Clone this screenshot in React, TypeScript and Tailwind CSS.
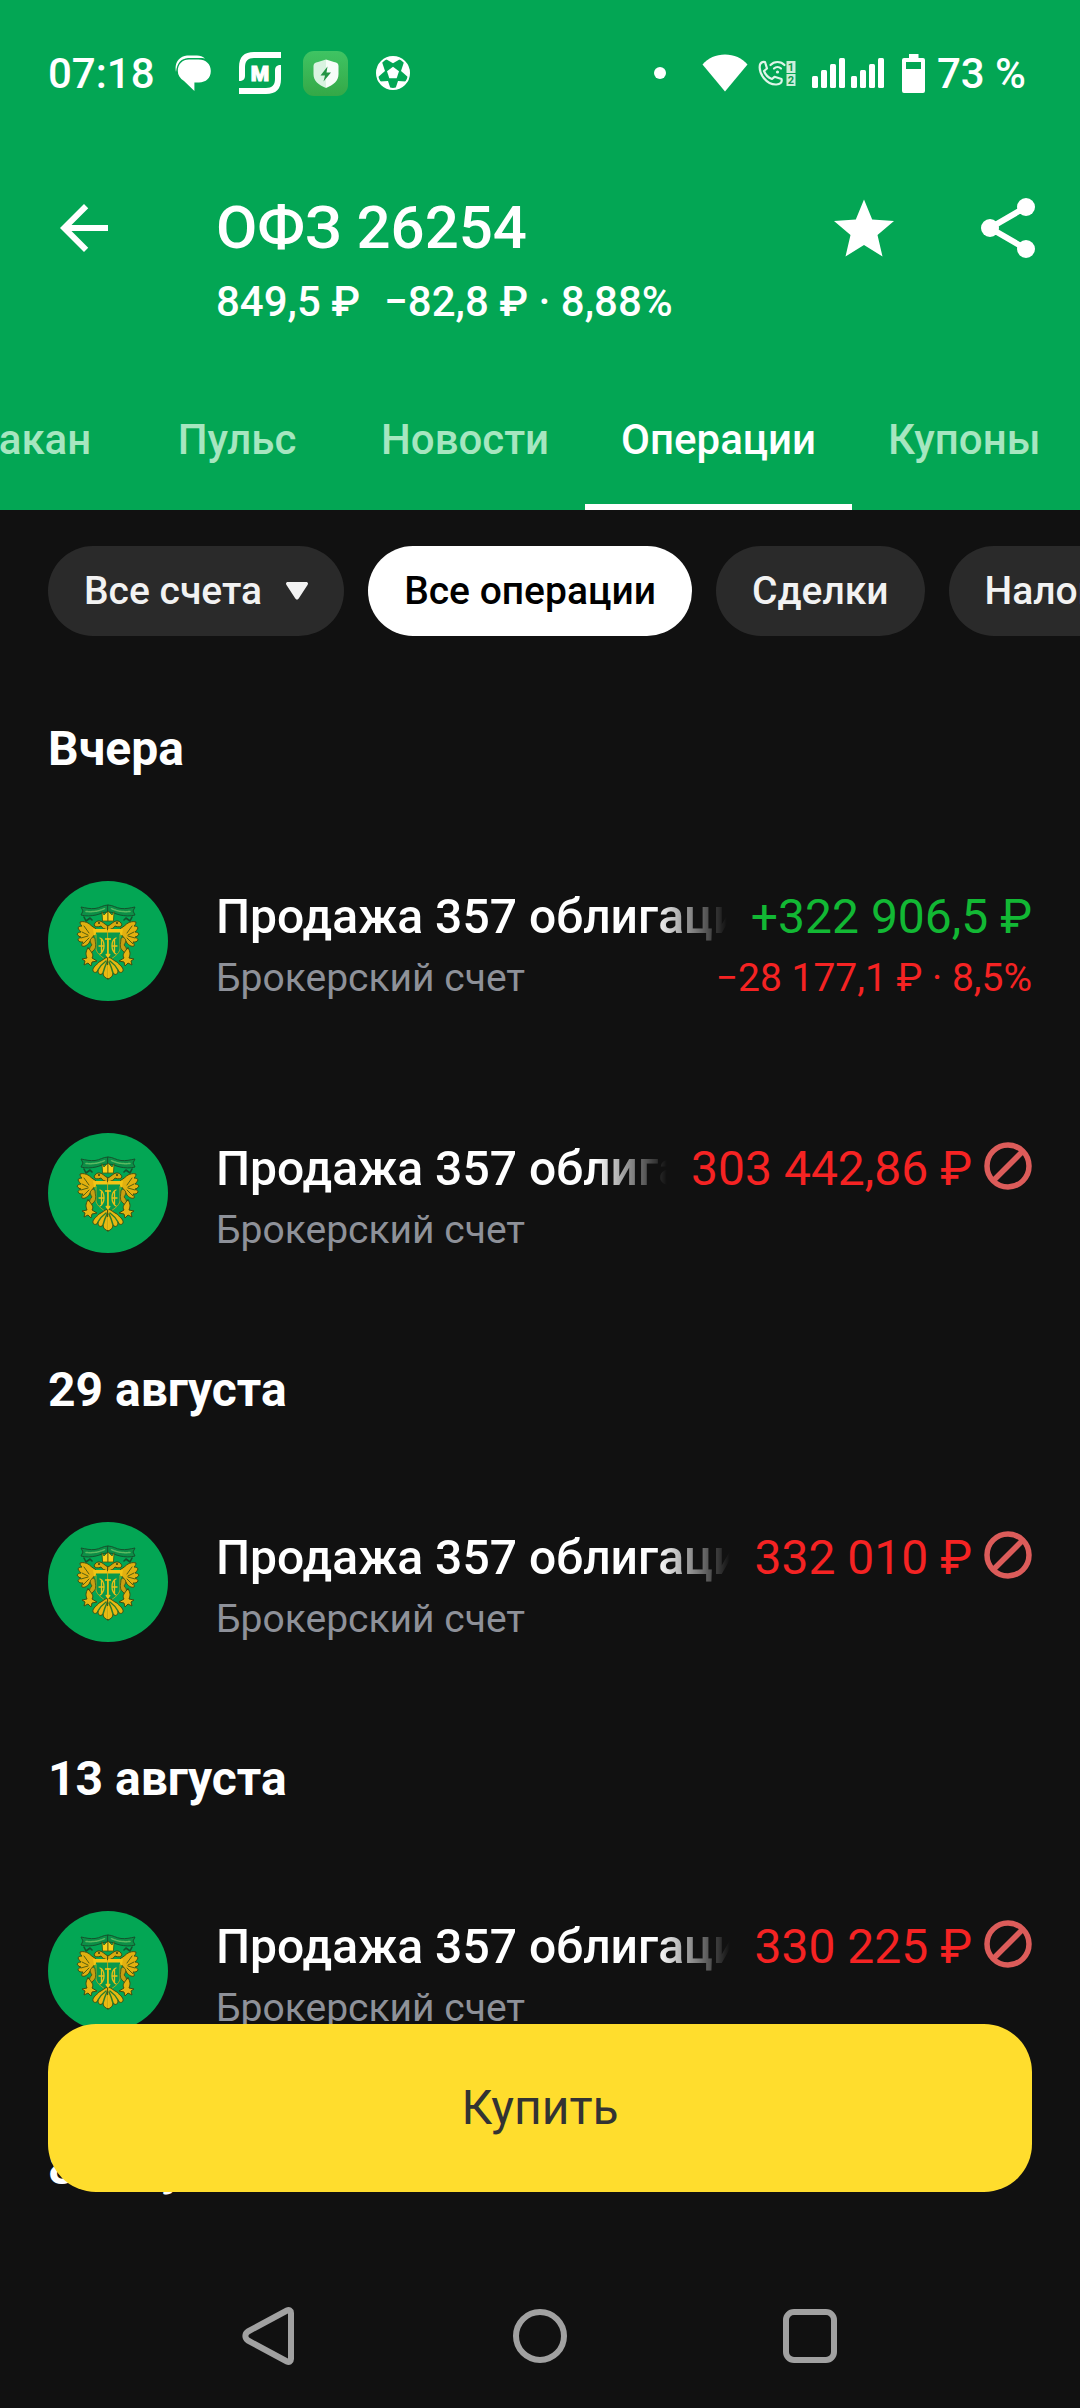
import React from "react";

type Operation = {
  title: string;
  account: string;
  amount: string;
  profit?: string;
  rejected?: boolean;
};

type Section = { date: string; operations: Operation[] };

const TITLE = "Продажа 357 облигаций";
const ACCOUNT = "Брокерский счет";

const sections: Section[] = [
  {
    date: "Вчера",
    operations: [
      {
        title: TITLE,
        account: ACCOUNT,
        amount: "+322\u00a0906,5\u00a0₽",
        profit: "−28\u00a0177,1\u00a0₽ · 8,5%",
      },
      { title: TITLE, account: ACCOUNT, amount: "303\u00a0442,86\u00a0₽", rejected: true },
    ],
  },
  {
    date: "29 августа",
    operations: [{ title: TITLE, account: ACCOUNT, amount: "332\u00a0010\u00a0₽", rejected: true }],
  },
  {
    date: "13 августа",
    operations: [{ title: TITLE, account: ACCOUNT, amount: "330\u00a0225\u00a0₽", rejected: true }],
  },
  { date: "8 августа", operations: [] },
];

const tabs = ["Стакан", "Пульс", "Новости", "Операции", "Купоны"];

function ChatIcon() {
  return (
    <svg className="h-9 w-9" viewBox="0 0 36 36" fill="#fff" aria-hidden="true">
      <path d="M1 17C-1 8 4 1 12 .4h10c3 0 6 1.200 8 3.200C27 2.700 24 3 13 3 6 3.500 2 8 1 17z" />
      <path d="M14 4.400h9.500C31 4.400 35.800 9 35.800 16S31 27.400 24 27.400h-4.600V36L9 26C5 23.500 2.800 20 2.800 16 2.800 9 7.500 4.400 14 4.400z" />
    </svg>
  );
}

function MagnitIcon() {
  return (
    <svg className="h-[42px] w-[42px]" viewBox="0 0 42 42" aria-hidden="true">
      <path d="M42 0H15C5 0 0 5 0 15v14c4 0 6-1.500 6-5.500V15c0-6 3-9 9-9h27z" fill="#fff" />
      <path d="M0 42h27c10 0 15-5 15-15V13c-4 0-6 1.500-6 5.500V27c0 6-3 9-9 9H0z" fill="#fff" />
      <text x="21" y="28.500" textAnchor="middle" fontFamily="Roboto, sans-serif" fontWeight="900" fontSize="21" fill="#fff" stroke="#fff" strokeWidth="1">
        M
      </text>
    </svg>
  );
}

function ShieldIcon() {
  return (
    <svg className="h-[45px] w-[45px]" viewBox="0 0 45 45" aria-hidden="true">
      <defs>
        <linearGradient id="shieldBg" x1="0" y1="0" x2="0" y2="1">
          <stop offset="0" stopColor="#3fc463" />
          <stop offset="1" stopColor="#34a847" />
        </linearGradient>
      </defs>
      <rect width="45" height="45" rx="11" fill="url(#shieldBg)" />
      <path d="M23 8.500 15 11c-3 .8-4.500 1.500-4.500 4v8c0 7 5 11 12.500 14z" fill="#d9f3e0" />
      <path d="M23 8.500l8 2.500c3 .8 4.500 1.500 4.500 4v8c0 7-5 11-12.500 14z" fill="#f6fdf8" />
      <path d="M24.500 15.500 17.500 24.500h4.500l-1.500 6 7.500-9h-4.500z" fill="#239443" />
    </svg>
  );
}

function BallIcon() {
  return (
    <svg className="h-[34px] w-[34px]" viewBox="0 0 34 34" aria-hidden="true">
      <defs>
        <clipPath id="ballClip">
          <circle cx="17" cy="17" r="16" />
        </clipPath>
      </defs>
      <circle cx="17" cy="17" r="16" fill="none" stroke="#fff" strokeWidth="2" />
      <g fill="#fff" clipPath="url(#ballClip)">
        <path d="M17 10.800l6 4.400-2.300 7h-7.400l-2.300-7z" />
        <path d="M8 2 17 7.300 26 2 22 0H12z" />
        <path d="M0 13l6-7 3 9-8 7z" />
        <path d="M34 13l-6-7-3 9 8 7z" />
        <path d="M4 25.500l8-.5 3 9H8z" />
        <path d="M30 25.500l-8-.5-3 9h7z" />
      </g>
    </svg>
  );
}

function WifiIcon() {
  return (
    <svg className="h-[38px] w-[46px]" viewBox="0 0 46 38" fill="#fff" aria-hidden="true">
      <path d="M23 37.500.5 10.500C6 4 14 .5 23 .5s17 3.500 22.500 10z" />
    </svg>
  );
}

function WifiCallIcon() {
  return (
    <svg className="h-[27px] w-[38px]" viewBox="0 0 38 27" aria-hidden="true">
      <g fill="none" stroke="#dff5e8" strokeWidth="2.200" strokeLinecap="round" strokeLinejoin="round">
        <path d="M2 4.500C3 2.500 5 1.500 7 2l2 6.500-3 2.500c1.500 4 4 6.500 8 8l2.500-2.200 7 2.200c1 3.500-1.500 5.500-5 5.500C9 25 0 14 2 4.500z" />
        <path d="M12.500 5C16 1 23 1 26.500 5" />
        <path d="M16 8.500c2-1.800 5-1.800 7 0" />
      </g>
      <circle cx="19.500" cy="12" r="1.600" fill="#dff5e8" />
      <rect x="28.500" y="1" width="9" height="12" fill="#cdeeda" />
      <rect x="28.500" y="14" width="9" height="12" fill="#cdeeda" />
      <g fontFamily="Roboto, sans-serif" fontWeight="700" fontSize="11" fill="#0a9a4d" textAnchor="middle">
        <text x="33" y="11">1</text>
        <text x="33" y="24">2</text>
      </g>
    </svg>
  );
}

function SignalIcon() {
  return (
    <svg className="h-[30px] w-[33px]" viewBox="0 0 33 30" fill="#fff" aria-hidden="true">
      <rect x="0" y="18" width="6" height="12" rx="1.500" />
      <rect x="9" y="12" width="6" height="18" rx="1.500" />
      <rect x="18" y="6" width="6" height="24" rx="1.500" />
      <rect x="27" y="0" width="6" height="30" rx="1.500" />
    </svg>
  );
}

function BatteryIcon() {
  return (
    <svg className="h-[39px] w-[23px]" viewBox="0 0 23 39" aria-hidden="true">
      <path fill="#fff" fillRule="evenodd" d="M7 0h9.500v4H21a2 2 0 0 1 2 2v31a2 2 0 0 1-2 2H2a2 2 0 0 1-2-2V6a2 2 0 0 1 2-2h5zM4 8v7h15V8z" />
    </svg>
  );
}

function StatusBar() {
  return (
    <div className="flex h-[146px] items-center justify-between pl-12 pr-[54px] text-[42px] font-medium">
      <div className="flex items-center">
        <span>07:18</span>
        <span className="ml-5 flex items-center">
          <ChatIcon />
          <span className="ml-7"><MagnitIcon /></span>
          <span className="ml-[22px]"><ShieldIcon /></span>
          <span className="ml-7"><BallIcon /></span>
        </span>
      </div>
      <div className="flex items-center">
        <span className="mr-9 h-3 w-3 rounded-full bg-white" />
        <WifiIcon />
        <span className="ml-2.5"><WifiCallIcon /></span>
        <span className="ml-4 flex gap-1.5">
          <SignalIcon />
          <SignalIcon />
        </span>
        <span className="ml-[18px]"><BatteryIcon /></span>
        <span className="ml-3">73 %</span>
      </div>
    </div>
  );
}

function Header() {
  return (
    <header className="bg-[#03a654] text-white">
      <StatusBar />
      <div className="flex items-start pt-[46px] pl-12 pr-9">
        <button aria-label="Назад" className="mr-24 shrink-0">
          <svg className="h-[72px] w-[72px]" viewBox="0 0 24 24" fill="currentColor" aria-hidden="true">
            <path d="M20 11H7.830l5.590-5.590L12 4l-8 8 8 8 1.410-1.410L7.830 13H20v-2z" />
          </svg>
        </button>
        <div className="min-w-0 flex-1 whitespace-nowrap font-medium">
          <h1 className="text-[60px] leading-[72px]">ОФЗ 26254</h1>
          <p className="mt-2 text-[42px] leading-[60px]">
            <span className="mr-6">849,5 ₽</span>
            <span>−82,8 ₽ · 8,88%</span>
          </p>
        </div>
        <button aria-label="В избранное" className="mr-[72px] shrink-0">
          <svg className="h-[72px] w-[72px]" viewBox="0 0 72 72" fill="currentColor" aria-hidden="true">
            <path d="M36 7.500l8.200 20L66 29l-16.500 14 5 21.500L36 53 17.500 64.500l5-21.500L6 29l21.800-1.500z" />
          </svg>
        </button>
        <button aria-label="Поделиться" className="shrink-0">
          <svg className="h-[72px] w-[72px]" viewBox="0 0 72 72" fill="currentColor" aria-hidden="true">
            <path d="M54 15 18 36l36 21" fill="none" stroke="currentColor" strokeWidth="6" />
            <circle cx="54" cy="15" r="9" />
            <circle cx="18" cy="36" r="9" />
            <circle cx="54" cy="57" r="9" />
          </svg>
        </button>
      </div>
      <nav className="mt-9 overflow-hidden">
        <div role="tablist" className="-ml-[87px] flex text-[42px] font-medium whitespace-nowrap">
          {tabs.map((tab) =>
            tab === "Операции" ? (
              <button key={tab} role="tab" aria-selected="true" className="h-[142px] min-w-[216px] shrink-0 border-y-[6px] border-t-transparent border-b-white px-9">
                {tab}
              </button>
            ) : (
              <button key={tab} role="tab" aria-selected="false" className="h-[142px] min-w-[216px] shrink-0 px-9 text-[#a6e6c0]">
                {tab}
              </button>
            ),
          )}
        </div>
      </nav>
    </header>
  );
}

function Filters() {
  const chip = "flex h-[90px] shrink-0 items-center rounded-full px-9";
  return (
    <div className="flex gap-6 overflow-hidden pt-9 pb-[42px] pl-12 text-[39px] font-medium whitespace-nowrap">
      <button className={`${chip} bg-[#2a2a2a] text-[#f2f2f2]`}>
        Все счета
        <svg className="ml-6 h-[18px] w-[22px]" viewBox="0 0 22 18" fill="currentColor" aria-hidden="true">
          <path d="M2 0h18c2 0 2.500 1.500 1.500 3L12.700 16.500c-1 1.500-2.400 1.500-3.400 0L.5 3C-.5 1.500 0 0 2 0z" />
        </svg>
      </button>
      <button className={`${chip} bg-white text-black`}>Все операции</button>
      <button className={`${chip} bg-[#2a2a2a] text-[#f2f2f2]`}>Сделки</button>
      <button className={`${chip} bg-[#2a2a2a] text-[#f2f2f2]`}>Налоги</button>
    </div>
  );
}

function EagleHalf() {
  return (
    <g strokeLinejoin="round" strokeLinecap="round">
      <path d="M60 24c-5 0-8 3-13 3.500-5 .5-9-.5-14-1.500l2 4-2 4c5 1.500 10 1 15 0 4-.8 7-3 12-3z" fill="#0c8f47" stroke="#14532d" strokeWidth="1" />
      <path d="M38 30.500c7 .5 12 0 19-3" fill="none" stroke="#5cba62" strokeWidth="1.500" strokeDasharray="1.500 1" />
      <path d="M36 36l2 4 4-3 2 2" fill="none" stroke="#14532d" strokeWidth="1.600" />
      {/* head and crown */}
      <path d="M60 49c-4-1-6-2-7-4-3 1.500-6 1-7-1 1-3 3-4.500 6-4 3 .6 4 3 8 5z" fill="#d9a90f" stroke="#3f4f12" strokeWidth="1" />
      <circle cx="51" cy="42" r="1" fill="#33430f" />
      <path d="M54 31l2 3 2-2 2-2v10h-5z" fill="#f7cf1b" stroke="#4b5a12" strokeWidth=".8" />
      {/* wing feathers */}
      <path d="M47 47c-3-1-5-4-7-5-2-1-5-2-8-1 0 2 1 3 2 4-2 0-4 1-4 2 1 2 2 3 3 4-2 0-3 1-4 2 1 2 3 3 4 3-2 1-3 2-3 3 1 2 3 2 5 2-1 2-2 3-1 4 3 1 5-1 7-3 2-4 4-6 6-9z" fill="#e2b010" stroke="#3f4f12" strokeWidth="1" />
      <path d="M36 45l5 7M34 51l6 3M33 57l7-2M35 63l6-6" stroke="#57600f" strokeWidth="1" fill="none" />
      {/* breast shield */}
      <path d="M60 50H47v3h1v15c1 5 6 8 12 12z" fill="#08994c" stroke="#d9a90f" strokeWidth=".8" />
      <path d="M45 48h15v3.500H48c0 2-1 3-2 3z" fill="#f3c515" />
      <path d="M45 56c-4 2-3 5-1 8-3 3-3 5-1 8l3-3c3-3 1-8 1-11z" fill="#c99f12" stroke="#3f4f12" strokeWidth=".8" />
      <path d="M40 67c-3 4-2 7-1 10l-5 1 3 2-1 4 4-2 3 3 1-4 5-1-5-3c2-3 0-6-4-10z" fill="#e5b412" stroke="#3f4f12" strokeWidth="1" />
      {/* tail */}
      <path d="M60 76c-4 1-6 4-9 5-1 2-7 5-6 9 1 2 4 2 5-1 0 4 2 6 5 3 0 3 2 5 5 6z" fill="#e8b812" stroke="#3f4f12" strokeWidth="1" />
      <path d="M58 80c-4 3-6 5-8 9M59 81c-2 4-3 7-4 11" stroke="#2c7d2b" strokeWidth="1.500" fill="none" />
      {/* monogram */}
      <path d="M52 57c3 1 4 4 4 8s-1 6-4 8M53.500 58v14M51 65h5" stroke="#e9c01a" strokeWidth="1.300" fill="none" />
    </g>
  );
}

function Emblem() {
  return (
    <svg className="h-[120px] w-[120px]" viewBox="0 0 120 120" aria-hidden="true">
      <circle cx="60" cy="60" r="60" fill="#03a654" />
      <EagleHalf />
      <g transform="translate(120 0) scale(-1 1)">
        <EagleHalf />
      </g>
      <path d="M60 57v18M57 58h6M58 73l2 3 2-3M60 84v13" stroke="#f3c515" strokeWidth="1.500" fill="none" />
    </svg>
  );
}

function RejectedIcon() {
  return (
    <svg className="mb-1.5 h-12 w-12 shrink-0" viewBox="0 0 48 48" fill="none" stroke="#dc5c5a" role="img" aria-label="Отклонено">
      <circle cx="24" cy="24" r="21" strokeWidth="5.500" />
      <path d="M9.500 38.500l29-29" strokeWidth="5.500" />
    </svg>
  );
}

function OperationRow({ op }: { op: Operation }) {
  return (
    <li className="flex items-start gap-12 px-12 pt-[66px] pb-16">
      <span className="shrink-0">
        <Emblem />
      </span>
      <div className="min-w-0 flex-1 whitespace-nowrap">
        <div className="flex h-[72px] items-center gap-6">
          <p className="min-w-0 flex-1 overflow-hidden text-[48px] leading-[72px] font-medium text-white [mask-image:linear-gradient(to_right,#000_calc(100%-72px),transparent)]">
            {op.title}
          </p>
          <div className="flex shrink-0 items-center gap-3 text-[48px] leading-[72px]">
            {op.rejected ? (
              <>
                <span className="text-[#f52323]">{op.amount}</span>
                <RejectedIcon />
              </>
            ) : (
              <span className="text-[#12b834]">{op.amount}</span>
            )}
          </div>
        </div>
        <div className="flex h-[50px] items-center justify-between text-[39px] leading-[50px]">
          <span className="text-[#8e9199]">{op.account}</span>
          {op.profit && <span className="text-[#f52323]">{op.profit}</span>}
        </div>
      </div>
    </li>
  );
}

function SystemNav() {
  const icon = "h-[60px] w-[60px]";
  return (
    <nav aria-label="Системная навигация" className="flex h-36 items-center justify-center gap-[210px]">
      <button aria-label="Назад">
        <svg className={icon} viewBox="0 0 60 60" fill="none" stroke="#a1a1a1" strokeWidth="6" strokeLinejoin="round" aria-hidden="true">
          <path d="M47 4.500 8 25.500c-3.500 2.500-3.500 6.500 0 9L47 55.500c2 1 4 0 4-2.500V7c0-2.500-2-3.500-4-2.500z" />
        </svg>
      </button>
      <button aria-label="Домой">
        <svg className={icon} viewBox="0 0 60 60" fill="none" stroke="#a1a1a1" strokeWidth="6" aria-hidden="true">
          <circle cx="30" cy="30" r="24" />
        </svg>
      </button>
      <button aria-label="Недавние">
        <svg className={icon} viewBox="0 0 60 60" fill="none" stroke="#a1a1a1" strokeWidth="6" aria-hidden="true">
          <rect x="6" y="6" width="48" height="48" rx="8" />
        </svg>
      </button>
    </nav>
  );
}

export default function App() {
  return (
    <div className="min-h-screen bg-[#111111] font-[Roboto,sans-serif] text-white">
      <Header />
      <main>
        <Filters />
        {sections.map((section) => (
          <section key={section.date}>
            <h2 className="px-12 pt-[41px] pb-9 text-[48px] leading-[60px] font-bold">{section.date}</h2>
            <ul>
              {section.operations.map((op, i) => (
                <OperationRow key={i} op={op} />
              ))}
            </ul>
          </section>
        ))}
      </main>
      <footer className="fixed inset-x-0 bottom-0">
        <div className="px-12 pb-[72px]">
          <button className="h-[168px] w-full rounded-[48px] bg-[#ffdd2d] text-[48px] text-[#333333]">Купить</button>
        </div>
        <SystemNav />
      </footer>
    </div>
  );
}
